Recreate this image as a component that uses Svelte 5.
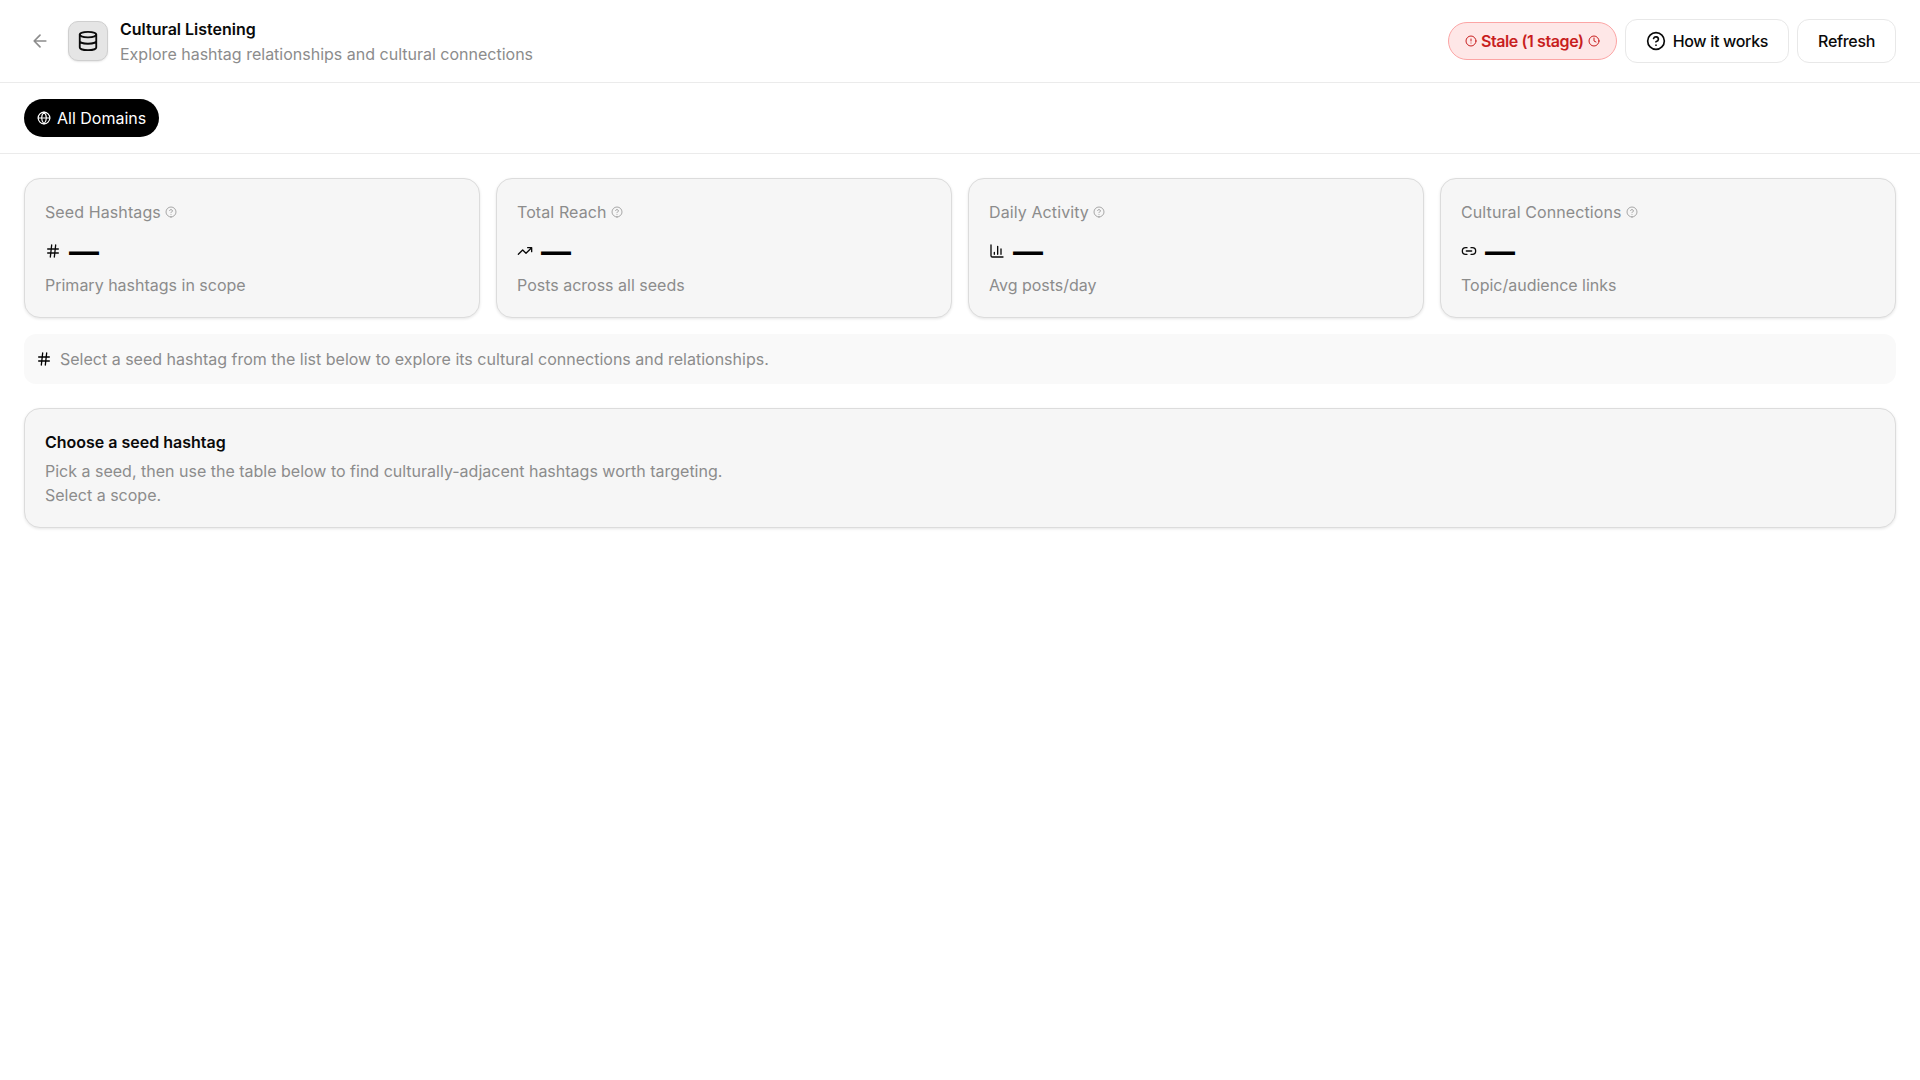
<script lang="ts">
	const info = 'M12 22a10 10 0 1 0 0-20 10 10 0 0 0 0 20zM9.1 9a3 3 0 0 1 5.8 1c0 2-3 3-3 3M12 17h.01';
	const stats = [
		{ label: 'Seed Hashtags', note: 'Primary hashtags in scope', icon: 'M4 9h16M4 15h16M10 3 8 21M16 3l-2 18' },
		{ label: 'Total Reach', note: 'Posts across all seeds', icon: 'M22 7l-8.5 8.5-5-5L2 17M16 7h6v6' },
		{ label: 'Daily Activity', note: 'Avg posts/day', icon: 'M3 3v16a2 2 0 0 0 2 2h16M18 17V9M13 17V5M8 17v-3' },
		{ label: 'Cultural Connections', note: 'Topic/audience links', icon: 'M9 17H7A5 5 0 0 1 7 7h2M15 7h2a5 5 0 1 1 0 10h-2M8 12h8' }
	];
</script>

<div class="page">
	<header class="head">
		<div class="head-left">
			<button class="back" aria-label="Back">
				<svg width="20" height="20" viewBox="0 0 24 24"><path d="m12 19-7-7 7-7M19 12H5" /></svg>
			</button>
			<div class="logo">
				<svg width="22" height="22" viewBox="0 0 24 24">
					<ellipse cx="12" cy="5" rx="9" ry="3" />
					<path d="M3 5v14a9 3 0 0 0 18 0V5M3 12a9 3 0 0 0 18 0" />
				</svg>
			</div>
			<div class="titles">
				<h1>Cultural Listening</h1>
				<p class="sub">Explore hashtag relationships and cultural connections</p>
			</div>
		</div>
		<div class="head-right">
			<span class="stale">
				<svg width="12" height="12" viewBox="0 0 24 24"><circle cx="12" cy="12" r="10" /><path d="M12 8v4M12 16h.01" /></svg>
				Stale (1 stage)
				<svg width="12" height="12" viewBox="0 0 24 24"><circle cx="12" cy="12" r="10" /><path d="M12 6v6l4 2" /></svg>
			</span>
			<button class="btn">
				<svg width="20" height="20" viewBox="0 0 24 24"><path d={info} /></svg>
				How it works
			</button>
			<button class="btn">Refresh</button>
		</div>
	</header>

	<div class="filters">
		<button class="pill">
			<svg width="14" height="14" viewBox="0 0 24 24"><circle cx="12" cy="12" r="10" /><path d="M12 2a14.5 14.5 0 0 0 0 20 14.5 14.5 0 0 0 0-20M2 12h20" /></svg>
			All Domains
		</button>
	</div>

	<main class="content">
		<div class="stats">
			{#each stats as s}
				<section class="card stat">
					<div class="stat-label">
						{s.label}
						<svg class="q" width="12" height="12" viewBox="0 0 24 24"><path d={info} /></svg>
					</div>
					<div class="stat-value">
						<svg width="16" height="16" viewBox="0 0 24 24"><path d={s.icon} /></svg>
						<span class="dash">—</span>
					</div>
					<div class="note">{s.note}</div>
				</section>
			{/each}
		</div>

		<div class="hint">
			<svg width="16" height="16" viewBox="0 0 24 24"><path d="M4 9h16M4 15h16M10 3 8 21M16 3l-2 18" /></svg>
			Select a seed hashtag from the list below to explore its cultural connections and relationships.
		</div>

		<section class="card choose">
			<h2>Choose a seed hashtag</h2>
			<p>Pick a seed, then use the table below to find culturally-adjacent hashtags worth targeting.</p>
			<p>Select a scope.</p>
		</section>
	</main>
</div>

<style>
	:global(body) {
		background: #fff;
		color: #0a0a0a;
		font-family: Inter, 'Liberation Sans', sans-serif;
	}
	svg {
		fill: none;
		stroke: currentColor;
		stroke-width: 2;
		stroke-linecap: round;
		stroke-linejoin: round;
		flex: none;
	}
	button {
		font-family: inherit;
		color: inherit;
	}
	.head {
		display: flex;
		align-items: center;
		justify-content: space-between;
		height: 82px;
		padding: 0 24px;
		border-bottom: 1px solid #ebebeb;
	}
	.head-left,
	.head-right {
		display: flex;
		align-items: center;
	}
	.head-right {
		gap: 8px;
	}
	.back {
		display: flex;
		align-items: center;
		justify-content: center;
		width: 32px;
		height: 32px;
		margin-right: 12px;
		padding: 0;
		border: 0;
		background: none;
		color: #8c8c8c;
	}
	.logo {
		display: flex;
		align-items: center;
		justify-content: center;
		box-sizing: border-box;
		width: 40px;
		height: 40px;
		margin-right: 12px;
		border: 1px solid #cfcfcf;
		border-radius: 10px;
		background: #e5e5e5;
		box-shadow: 0 1px 2px rgba(0, 0, 0, 0.1);
	}
	.titles {
		padding-top: 1px;
	}
	h1 {
		margin: 0;
		font-size: 16px;
		line-height: 24px;
		font-weight: 600;
	}
	.sub {
		margin: 1px 0 0;
		font-size: 16px;
		line-height: 24px;
		color: #8c8c8c;
	}
	.stale {
		display: flex;
		align-items: center;
		gap: 4px;
		box-sizing: border-box;
		height: 38px;
		padding: 0 16px;
		border: 1px solid #fca5a5;
		border-radius: 19px;
		background: #fee7e7;
		color: #c81e1e;
		font-size: 16px;
		font-weight: 600;
		letter-spacing: -0.025em;
	}
	.btn {
		display: flex;
		align-items: center;
		gap: 7px;
		box-sizing: border-box;
		height: 44px;
		padding: 0 20px;
		border: 1px solid #e8e8e8;
		border-radius: 12px;
		background: #fff;
		font-size: 16px;
		font-weight: 500;
		letter-spacing: -0.02em;
	}
	.filters {
		display: flex;
		align-items: center;
		height: 70px;
		padding: 0 24px;
		border-bottom: 1px solid #ebebeb;
	}
	.pill {
		display: flex;
		align-items: center;
		gap: 6px;
		height: 38px;
		padding: 0 13px;
		border: 0;
		border-radius: 19px;
		background: #000;
		color: #fff;
		font-size: 16px;
	}
	.content {
		display: flex;
		flex-direction: column;
		padding: 24px;
	}
	.stats {
		display: grid;
		grid-template-columns: repeat(4, 1fr);
		gap: 16px;
	}
	.card {
		box-sizing: border-box;
		padding: 21px 20px 20px;
		border: 1px solid #dcdcdc;
		border-radius: 16px;
		background: #f6f6f6;
		box-shadow: 0 1px 3px rgba(0, 0, 0, 0.1);
	}
	.stat {
		height: 140px;
	}
	.stat-label {
		display: flex;
		align-items: center;
		gap: 4px;
		font-size: 16px;
		line-height: 24px;
		letter-spacing: 0.1px;
		color: #8c8c8c;
	}
	.q {
		color: #8c8c8c;
		stroke-width: 1.5;
	}
	.stat-value {
		display: flex;
		align-items: center;
		gap: 8px;
		height: 24px;
		margin-top: 15px;
	}
	.dash {
		font-size: 30px;
		line-height: 24px;
		font-weight: 700;
		color: #000;
	}
	.note {
		margin-top: 10px;
		font-size: 16px;
		line-height: 24px;
		color: #8c8c8c;
	}
	.hint {
		display: flex;
		align-items: center;
		gap: 8px;
		box-sizing: border-box;
		height: 50px;
		margin-top: 16px;
		padding: 0 12px;
		border-radius: 12px;
		background: #f9f9f9;
		font-size: 16px;
		color: #8c8c8c;
	}
	.hint svg {
		color: #000;
	}
	.choose {
		height: 120px;
		margin-top: 24px;
	}
	h2 {
		margin: 0 0 5px;
		font-size: 16px;
		line-height: 24px;
		font-weight: 600;
	}
	.choose p {
		margin: 0;
		font-size: 16px;
		line-height: 24px;
		color: #8c8c8c;
	}
</style>
